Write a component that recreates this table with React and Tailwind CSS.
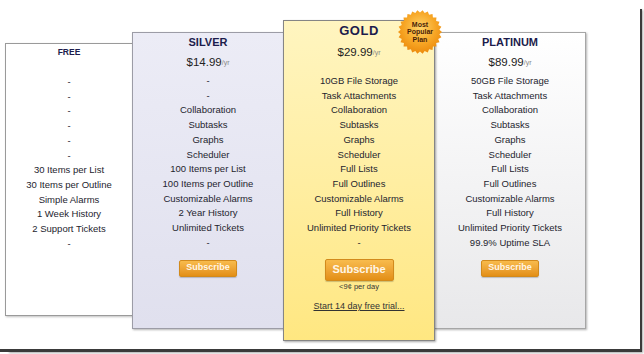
import React from "react";

const ROW = "h-[14.73px] leading-[14.73px] text-[9.5px] text-[#24242e] whitespace-nowrap";

function Features({ items }) {
  return (
    <div className="flex flex-col items-center">
      {items.map((t, i) => (
        <div key={i} className={ROW}>{t}</div>
      ))}
    </div>
  );
}

function Price({ v, h }) {
  return (
    <div className={`flex items-center justify-center ${h}`}>
      <span className="text-[11.5px] text-[#222]">{v}</span>
      <span className="text-[7px] text-[#888] mt-[2px]">/yr</span>
    </div>
  );
}

function SmallButton() {
  return (
    <div className="mt-[9px] w-[58px] h-[17px] rounded-[2px] border border-[#d28a1c] bg-gradient-to-b from-[#f8bb4c] to-[#e38f14] flex items-center justify-center text-[9px] font-bold text-[#fff6e6] shadow-[0_1px_1px_rgba(0,0,0,0.2)]">
      Subscribe
    </div>
  );
}

function Badge() {
  const pts = [];
  const n = 26;
  for (let i = 0; i < n * 2; i++) {
    const a = (Math.PI * i) / n;
    const r = i % 2 === 0 ? 22 : 19.5;
    pts.push(`${(22 + r * Math.cos(a)).toFixed(2)},${(22 + r * Math.sin(a)).toFixed(2)}`);
  }
  return (
    <div className="absolute left-[114px] top-[-11px] w-[44px] h-[44px]">
      <svg width="44" height="44" viewBox="0 0 44 44" className="absolute inset-0">
        <defs>
          <radialGradient id="bg" cx="50%" cy="40%" r="60%">
            <stop offset="0%" stopColor="#fdd36a" />
            <stop offset="60%" stopColor="#f7a625" />
            <stop offset="100%" stopColor="#ec8a0c" />
          </radialGradient>
        </defs>
        <polygon points={pts.join(" ")} fill="url(#bg)" />
      </svg>
      <div className="absolute inset-0 flex flex-col items-center justify-center text-[7px] leading-[7.5px] font-bold text-[#4a2206]">
        <span>Most</span>
        <span>Popular</span>
        <span>Plan</span>
      </div>
    </div>
  );
}

export default function App() {
  return (
    <div className="w-[644px] h-[354px] bg-white" style={{ fontFamily: '"Liberation Sans", Arial, sans-serif' }}>
      <div className="w-[640px] h-[349px] bg-white shadow-[5px_6px_0_-3px_#3a3a3a,0_3px_0_0_#3a3a3a,6px_7px_2px_-3px_#aaaaaa]">
        <div className="flex items-start pl-[5px]">
          {/* FREE */}
          <div className="mt-[43px] w-[128px] h-[273px] border border-[#9a9a9a] bg-white flex flex-col items-center shadow-[1px_1px_2px_rgba(0,0,0,0.25)]">
            <div className="h-[16px] flex items-center text-[8.5px] font-bold text-[#1c1c4c]">FREE</div>
            <div className="h-[15px]" />
            <Features
              items={["-", "-", "-", "-", "-", "-", "30 Items per List", "30 Items per Outline", "Simple Alarms", "1 Week History", "2 Support Tickets", "-"]}
            />
          </div>
          {/* SILVER */}
          <div className="-ml-px mt-[32px] w-[152px] h-[297px] border border-[#9c9ca6] bg-gradient-to-b from-[#ececf6] to-[#e0e0ee] flex flex-col items-center relative shadow-[1px_1px_2px_rgba(0,0,0,0.3)]">
            <div className="h-[18px] flex items-center text-[11px] font-bold text-[#1c1c4c]">SILVER</div>
            <Price v="$14.99" h="h-[23px]" />
            <Features
              items={["-", "-", "Collaboration", "Subtasks", "Graphs", "Scheduler", "100 Items per List", "100 Items per Outline", "Customizable Alarms", "2 Year History", "Unlimited Tickets", "-"]}
            />
            <SmallButton />
          </div>
          {/* GOLD */}
          <div className="-ml-px mt-[20px] w-[152px] h-[321px] border border-[#858585] bg-gradient-to-b from-[#fff5c0] to-[#ffe781] flex flex-col items-center relative z-10 shadow-[1px_1px_2px_rgba(0,0,0,0.35)]">
            <Badge />
            <div className="h-[20px] flex items-center text-[13px] font-bold tracking-[0.5px] text-[#1c1c4c]">GOLD</div>
            <Price v="$29.99" h="h-[23px]" />
            <div className="h-[10px]" />
            <Features
              items={["10GB File Storage", "Task Attachments", "Collaboration", "Subtasks", "Graphs", "Scheduler", "Full Lists", "Full Outlines", "Customizable Alarms", "Full History", "Unlimited Priority Tickets", "-"]}
            />
            <div className="mt-[8px] w-[69px] h-[22px] rounded-[2px] border border-[#d28a1c] bg-gradient-to-b from-[#f8bb4c] to-[#e38f14] flex items-center justify-center text-[11px] font-bold text-[#fff6e6] shadow-[0_1px_1px_rgba(0,0,0,0.2)]">
              Subscribe
            </div>
            <div className="h-[12px] flex items-center text-[7.5px] text-[#333]">&lt;9¢ per day</div>
            <div className="mt-[7px] h-[14px] flex items-center text-[9px] text-[#333] underline">Start 14 day free trial...</div>
          </div>
          {/* PLATINUM */}
          <div className="-ml-px mt-[32px] w-[152px] h-[297px] border border-[#a6a6a6] bg-gradient-to-b from-[#ffffff] to-[#e8e8ea] flex flex-col items-center relative shadow-[1px_1px_2px_rgba(0,0,0,0.3)]">
            <div className="h-[18px] flex items-center text-[11px] font-bold text-[#1c1c4c]">PLATINUM</div>
            <Price v="$89.99" h="h-[23px]" />
            <Features
              items={["50GB File Storage", "Task Attachments", "Collaboration", "Subtasks", "Graphs", "Scheduler", "Full Lists", "Full Outlines", "Customizable Alarms", "Full History", "Unlimited Priority Tickets", "99.9% Uptime SLA"]}
            />
            <SmallButton />
          </div>
        </div>
      </div>
    </div>
  );
}
